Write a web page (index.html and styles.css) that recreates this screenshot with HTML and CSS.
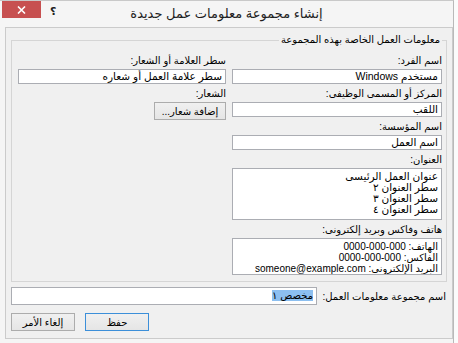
FILE: index.html
```html
<!DOCTYPE html>
<html lang="ar">
<head>
<meta charset="utf-8">
<title>إنشاء مجموعة معلومات عمل جديدة</title>
<link rel="stylesheet" href="styles.css">
</head>
<body>
<div class="window" dir="rtl">
  <div class="titlebar">
    <div class="spacer"></div>
    <div class="title">إنشاء مجموعة معلومات عمل جديدة</div>
    <div class="controls">
      <span class="help">؟</span>
      <div class="close">
        <svg width="9" height="8" viewBox="0 0 9 8"><path d="M1 0.5 L8 7.5 M8 0.5 L1 7.5" stroke="#fff" stroke-width="1.6" fill="none"/></svg>
      </div>
    </div>
  </div>
  <div class="client">
    <fieldset class="group">
      <legend>معلومات العمل الخاصة بهذه المجموعة</legend>
      <div class="cols">
        <div class="col">
          <div class="label">اسم الفرد:</div>
          <div class="textbox">مستخدم Windows</div>
          <div class="label">المركز أو المسمى الوظيفى:</div>
          <div class="textbox">اللقب</div>
          <div class="label">اسم المؤسسة:</div>
          <div class="textbox">اسم العمل</div>
          <div class="label">العنوان:</div>
          <div class="textbox multi address">
            <div>عنوان العمل الرئيسى</div>
            <div>سطر العنوان ٢</div>
            <div>سطر العنوان ٣</div>
            <div>سطر العنوان ٤</div>
          </div>
          <div class="label">هاتف وفاكس وبريد إلكترونى:</div>
          <div class="textbox multi contact">
            <div>الهاتف: 000-000-0000</div>
            <div>الفاكس: 000-000-0000</div>
            <div>البريد الإلكترونى: someone@example.com</div>
          </div>
        </div>
        <div class="col">
          <div class="label">سطر العلامة أو الشعار:</div>
          <div class="textbox">سطر علامة العمل أو شعاره</div>
          <div class="label">الشعار:</div>
          <div class="btn-wrap"><button class="btn logo">إضافة شعار...</button></div>
        </div>
      </div>
    </fieldset>
    <div class="name-row">
      <div class="name-label">اسم مجموعة معلومات العمل:</div>
      <div class="textbox name"><span class="sel">مخصص ١</span></div>
    </div>
    <div class="buttons">
      <button class="btn default">حفظ</button>
      <button class="btn">إلغاء الأمر</button>
    </div>
  </div>
</div>
</body>
</html>
```

FILE: styles.css
```css
html, body {
  margin: 0;
  padding: 0;
  background: #fbfbfb;
}
body {
  width: 458px;
  height: 343px;
  overflow: hidden;
  font-family: "Liberation Sans", "DejaVu Sans", sans-serif;
  font-size: 10px;
  color: #000;
}
.window {
  width: 454px;
  height: 343px;
  box-sizing: border-box;
  background: #f5f5f5;
  border-right: 1px solid #b9b9b9;
  border-top: 1px solid #c9c9c9;
}
.titlebar {
  height: 26px;
  display: grid;
  grid-template-columns: 1fr auto 1fr;
  align-items: start;
}
.title {
  font-size: 13px;
  line-height: 26px;
  color: #1e1e1e;
  white-space: nowrap;
}
.controls {
  justify-self: end;
  display: flex;
  align-items: flex-start;
  gap: 9px;
  padding-left: 2px;
}
.close {
  width: 39px;
  height: 17px;
  background: #c75050;
  display: flex;
  align-items: center;
  justify-content: center;
}
.help {
  font-size: 11px;
  font-weight: bold;
  line-height: 20px;
  color: #222;
}
.client {
  margin-left: 2px;
  width: 448px;
  height: 312px;
  box-sizing: border-box;
  border: 1px solid #cbcbcb;
  background: #f0f0f0;
  display: flex;
  flex-direction: column;
}
.group {
  margin: 6px 5px 0 5px;
  min-width: 0;
  border: 1px solid #d5d5d5;
  padding: 8px 4px 6px 6px;
}
.group legend {
  padding: 0 2px;
  line-height: 12px;
}
.cols {
  display: grid;
  grid-template-columns: 210px 208px;
  column-gap: 6px;
  align-items: start;
}
.col {
  display: flex;
  flex-direction: column;
}
.label {
  line-height: 13px;
  margin-top: 3px;
}
.label:first-child {
  margin-top: 0;
}
.textbox {
  margin-top: 2px;
  height: 15px;
  box-sizing: border-box;
  border: 1px solid #abadb3;
  background: #fff;
  padding: 0 3px;
  font-size: 10.5px;
  line-height: 13px;
  white-space: nowrap;
  overflow: hidden;
}
.textbox.multi {
  padding-top: 2px;
  line-height: 11px;
}
.address {
  height: 52px;
}
.contact {
  height: 37px;
  font-size: 10px;
}
.btn-wrap {
  display: flex;
  margin-top: 2px;
}
.btn {
  font-family: inherit;
  font-size: 10px;
  height: 18px;
  box-sizing: border-box;
  border: 1px solid #acacac;
  background: linear-gradient(#f0f0f0, #e5e5e5);
  padding: 0;
  color: #000;
  margin: 0;
}
.btn.logo {
  width: 72px;
}
.btn.default {
  border-color: #3c8fd9;
}
.name-row {
  margin-top: 5px;
  display: flex;
  align-items: center;
  justify-content: space-between;
  padding: 0 6px 0 5px;
}
.name-label {
  line-height: 13px;
}
.textbox.name {
  margin-top: 0;
  width: 306px;
  height: 18px;
  line-height: 16px;
  font-size: 10px;
}
.sel {
  background: #8cbff0;
}
.buttons {
  margin-top: 8px;
  display: flex;
  justify-content: flex-end;
  gap: 10px;
  padding-left: 5px;
}
.buttons .btn {
  width: 64px;
}
```
